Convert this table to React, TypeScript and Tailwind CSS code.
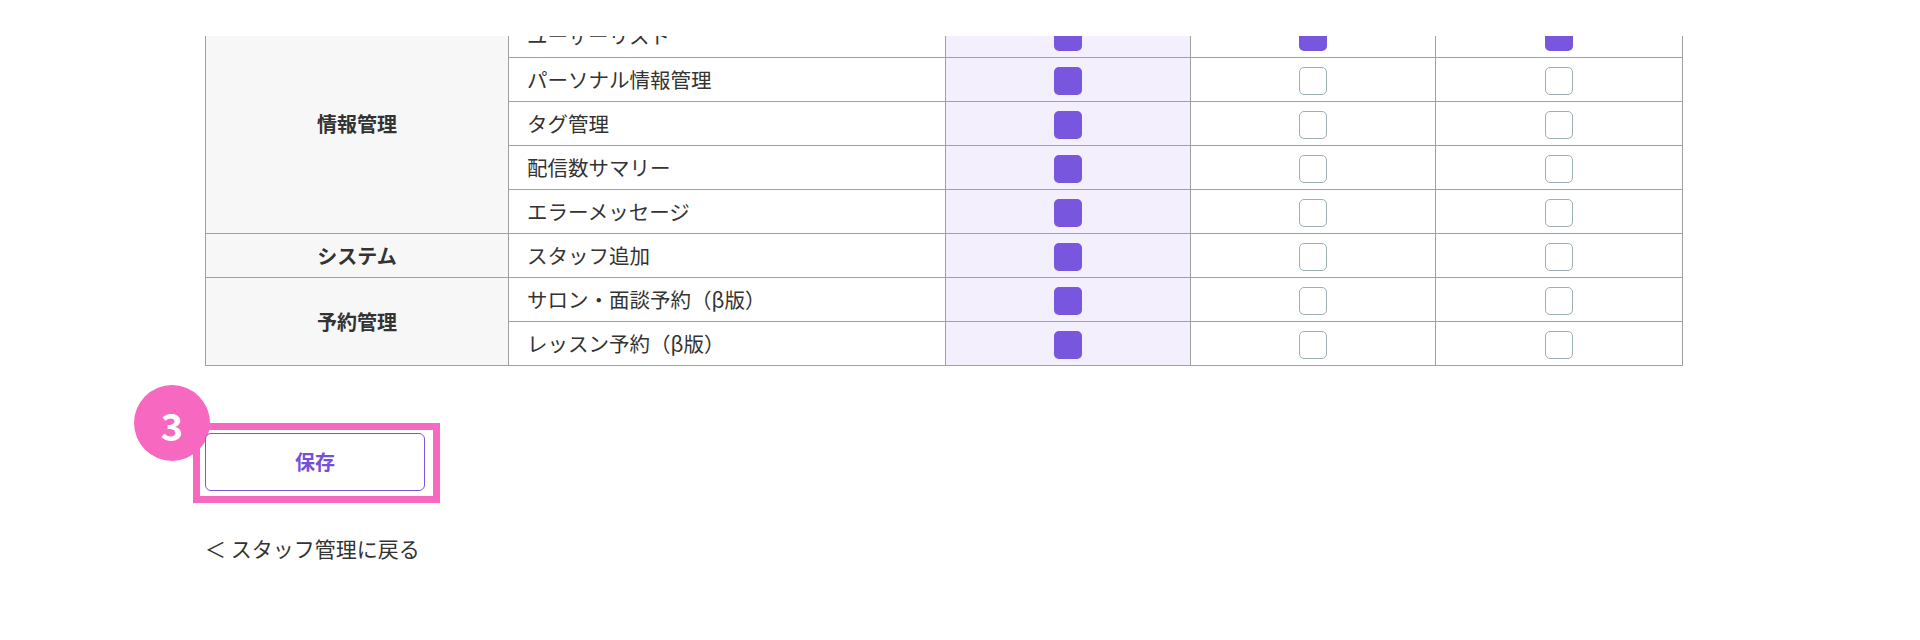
import React from "react";

type Row = { label: string; checks: [boolean, boolean, boolean] };
type Group = { name: string; rows: Row[] };

const groups: Group[] = [
  {
    name: "情報管理",
    rows: [
      { label: "ユーザーリスト", checks: [true, true, true] },
      { label: "パーソナル情報管理", checks: [true, false, false] },
      { label: "タグ管理", checks: [true, false, false] },
      { label: "配信数サマリー", checks: [true, false, false] },
      { label: "エラーメッセージ", checks: [true, false, false] },
    ],
  },
  {
    name: "システム",
    rows: [{ label: "スタッフ追加", checks: [true, false, false] }],
  },
  {
    name: "予約管理",
    rows: [
      { label: "サロン・面談予約（β版）", checks: [true, false, false] },
      { label: "レッスン予約（β版）", checks: [true, false, false] },
    ],
  },
];

function Check({ checked }: { checked: boolean }) {
  return checked ? (
    <span className="inline-block w-[28px] h-[28px] rounded-[5px] bg-[#7856de] align-middle" />
  ) : (
    <span className="inline-block w-[28px] h-[28px] rounded-[5px] border-[1.5px] border-[#9fb0b5] bg-white align-middle" />
  );
}

export default function App() {
  return (
    <div
      className="w-[1920px] h-[640px] bg-white text-[#333] overflow-hidden"
      style={{ fontFamily: '"Noto Sans CJK JP", "Noto Sans", sans-serif' }}
    >
      <div className="h-[36px] bg-white" />

      {/* permission table (scrolled, top row partly hidden) */}
      <div className="pl-[205px] h-[330px] overflow-hidden">
        <table className="-mt-[23px] w-[1477px] table-fixed border-collapse text-[20px]">
          <colgroup>
            <col className="w-[303px]" />
            <col className="w-[437px]" />
            <col className="w-[245px]" />
            <col className="w-[245px]" />
            <col className="w-[247px]" />
          </colgroup>
          <tbody>
            {groups.map((g) =>
              g.rows.map((r, i) => (
                <tr key={r.label} className="h-[44px]">
                  {i === 0 && (
                    <td
                      rowSpan={g.rows.length}
                      className="border border-[#a0a0a0] bg-[#f7f7f7] text-center font-bold p-0"
                    >
                      {g.name}
                    </td>
                  )}
                  <td className="border border-[#a0a0a0] pl-[18px] p-0 whitespace-nowrap text-[20.5px]">{r.label}</td>
                  <td className="border border-[#a0a0a0] bg-[#f3effd] text-center p-0">
                    <Check checked={r.checks[0]} />
                  </td>
                  <td className="border border-[#a0a0a0] text-center p-0">
                    <Check checked={r.checks[1]} />
                  </td>
                  <td className="border border-[#a0a0a0] text-center p-0">
                    <Check checked={r.checks[2]} />
                  </td>
                </tr>
              ))
            )}
          </tbody>
        </table>
      </div>

      {/* save button with step marker */}
      <div className="pl-[205px] pt-[67px]">
        <div className="relative w-[220px]">
          <div className="absolute -left-[12px] -top-[10px] -right-[15px] -bottom-[12px] border-[7px] border-[#f768c0]" />
          <div className="absolute -left-[71px] -top-[48px] w-[76px] h-[76px] rounded-full bg-[#f768c0] flex items-center justify-center text-white font-bold text-[38px] leading-none pt-[4px]">
            3
          </div>
          <button className="relative w-[220px] h-[58px] rounded-[6px] border border-[#7856de] bg-white text-[#7651d6] font-bold text-[20px]">
            保存
          </button>
        </div>
      </div>

      <div className="pl-[205px] mt-[42px] text-[21px] leading-[30px]">
        <a className="text-[#333]">＜ スタッフ管理に戻る</a>
      </div>
    </div>
  );
}
